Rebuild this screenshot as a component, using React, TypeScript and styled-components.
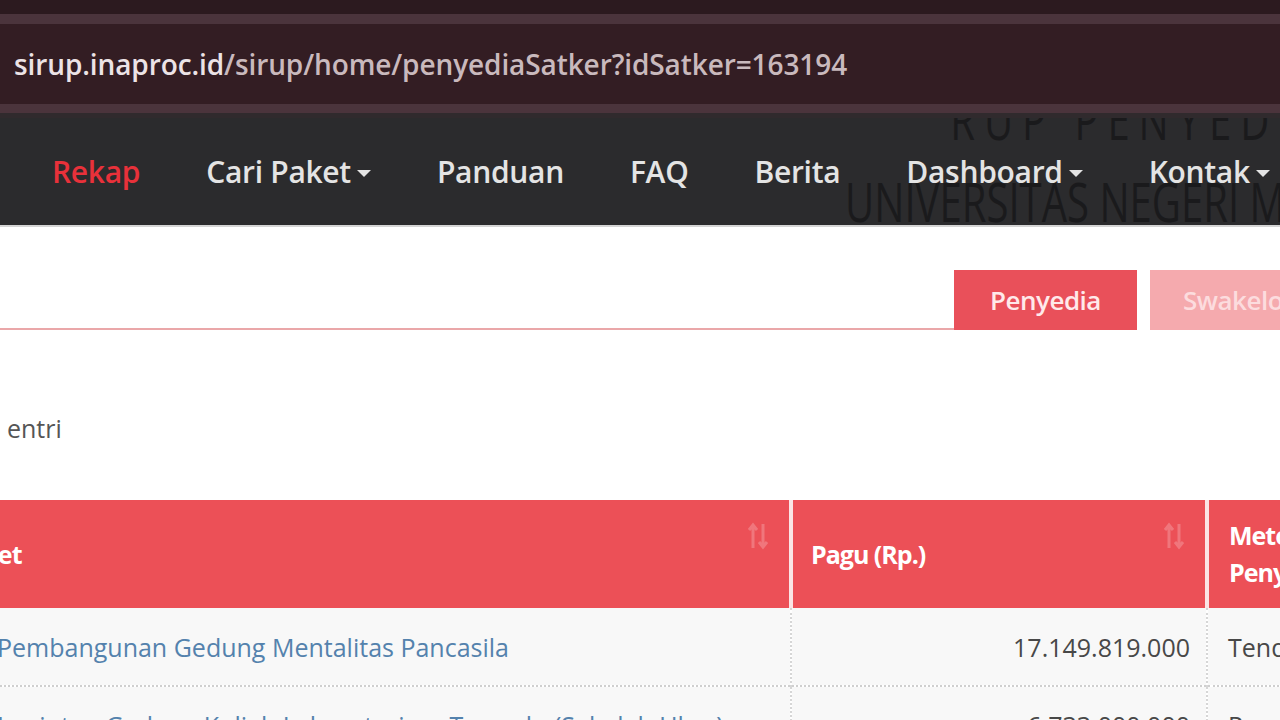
import styled, { createGlobalStyle } from 'styled-components'

const Global = createGlobalStyle`
	html, body {
		margin: 0;
		padding: 0;
		background: #ffffff;
		overflow: hidden;
	}
	body {
		font-family: "Open Sans", "DejaVu Sans", sans-serif;
	}
`

const Page = styled.div`
	width: 1280px;
	height: 720px;
	overflow: hidden;
	display: flex;
	flex-direction: column;
	& > * {
		flex-shrink: 0;
	}
`

const Chrome = styled.div`
	display: flex;
	flex-direction: column;
	background: #2c1a1f;
	padding-top: 14px;
`

const Band = styled.div<{ $h: number }>`
	height: ${p => p.$h}px;
	background: #4b343c;
`

const UrlBar = styled.div`
	height: 80px;
	background: #331d23;
	display: flex;
	align-items: center;
	padding-left: 14px;
	font-size: 28px;
	letter-spacing: -0.1px;
	font-weight: 600;
	color: #c9b9bd;
`

const Host = styled.span`
	color: #ece3e6;
`

const Shadow = styled.div`
	height: 5px;
	background: #302a2d;
`

const Navbar = styled.nav`
	position: relative;
	height: 107px;
	background: #2b2b2d;
	border-bottom: 2px solid #d4d4d4;
	overflow: hidden;
	display: flex;
	align-items: center;
	padding-left: 52px;
	gap: 66px;
`

const Heading = styled.div`
	position: absolute;
	left: 845px;
	top: -40px;
	color: #1a1a1c;
	font-family: "Open Sans", sans-serif;
	font-size: 54px;
	line-height: 82px;
	white-space: nowrap;
	transform: scaleX(0.742);
	transform-origin: left top;
	z-index: 0;
`

const HeadLine = styled.div<{ $indent: number; $spacing: number }>`
	padding-left: ${p => p.$indent}px;
	letter-spacing: ${p => p.$spacing}px;
`

const NavItem = styled.a<{ $active?: boolean }>`
	position: relative;
	z-index: 1;
	display: flex;
	align-items: center;
	gap: 6px;
	font-size: 30px;
	font-weight: 600;
	letter-spacing: -0.3px;
	color: ${p => (p.$active ? '#e8313a' : '#e4e4e4')};
	text-decoration: none;
	white-space: nowrap;
`

const Caret = styled.span`
	width: 0;
	height: 0;
	margin-top: 4px;
	border-left: 7px solid transparent;
	border-right: 7px solid transparent;
	border-top: 7px solid currentColor;
`

const Content = styled.main`
	display: flex;
	flex-direction: column;
	padding-top: 43px;
`

const TabBar = styled.div`
	display: flex;
	align-items: flex-end;
`

const TabLine = styled.div`
	flex: 1;
	border-bottom: 2px solid #eaa7a9;
`

const Tab = styled.button<{ $active?: boolean }>`
	height: 60px;
	width: ${p => (p.$active ? 183 : 160)}px;
	flex-shrink: 0;
	border: none;
	background: ${p => (p.$active ? '#e9505a' : '#f5aaae')};
	color: ${p => (p.$active ? '#ffe9ea' : '#fcdcde')};
	font-family: "Open Sans", sans-serif;
	font-size: 26px;
	font-weight: 600;
	letter-spacing: -0.5px;
	text-align: ${p => (p.$active ? 'center' : 'left')};
	padding: 0 0 0 ${p => (p.$active ? 0 : 33)}px;
	margin-left: ${p => (p.$active ? 0 : 13)}px;
	margin-right: ${p => (p.$active ? 0 : -30)}px;
`

const Entries = styled.div`
	margin-top: 83px;
	padding-left: 7px;
	font-size: 25px;
	color: #555555;
	height: 30px;
	line-height: 30px;
`

const TableWrap = styled.div`
	margin-top: 57px;
	overflow: hidden;
`

const Table = styled.table`
	margin-left: -100px;
	border-collapse: collapse;
	table-layout: fixed;
	width: 1500px;
`

const Head = styled.th<{ $w: number; $pad: number }>`
	position: relative;
	width: ${p => p.$w}px;
	height: 108px;
	padding: 0 0 0 ${p => Math.max(0, p.$pad)}px;
	text-indent: ${p => Math.min(0, p.$pad)}px;
	background: #ec5057;
	border-right: 4px solid #fbe4e5;
	color: #ffffff;
	font-size: 25px;
	font-weight: 700;
	letter-spacing: -1px;
	text-align: left;
	line-height: 37px;
	box-sizing: border-box;
`

const SortIcon = styled.svg`
	position: absolute;
	right: 20px;
	top: 22px;
	opacity: 0.22;
`

const Row = styled.tr`
	background: #f8f8f8;
	border-bottom: 2px dotted #cfcfcf;
`

const Cell = styled.td<{ $align?: string; $pad: number }>`
	height: 78px;
	padding: 0 ${p => (p.$align === 'right' ? 16 : 0)}px 0 ${p => p.$pad}px;
	text-align: ${p => p.$align || 'left'};
	font-size: 25px;
	color: #484848;
	white-space: nowrap;
	overflow: hidden;
	border-right: 2px dotted #d6d6d6;
	box-sizing: border-box;
`

const Link = styled.a`
	color: #5482ad;
	text-decoration: none;
`

function Sort() {
	return (
		<SortIcon width="22" height="28" viewBox="0 0 22 28">
			<path d="M6 26 V3 M2 8 L6 3 L10 8" stroke="#fff" strokeWidth="3" fill="none" />
			<path d="M16 2 V25 M12 20 L16 25 L20 20" stroke="#fff" strokeWidth="3" fill="none" />
		</SortIcon>
	)
}

const rows = [
	{ name: 'Pembangunan Gedung Mentalitas Pancasila', pagu: '17.149.819.000', metode: 'Tender' },
	{ name: 'Lanjutan Gedung Kuliah Laboratorium Terpadu (Sekolah Ukur)', pagu: '6.733.000.000', metode: 'Pengadaan Langsung' },
]

export default function App() {
	return (
		<Page>
			<Global />
			<Chrome>
				<Band $h={10} />
				<UrlBar>
					<Host>sirup.inaproc.id</Host>/sirup/home/penyediaSatker?idSatker=163194
				</UrlBar>
				<Band $h={9} />
				<Shadow />
			</Chrome>
			<Navbar>
				<Heading>
					<HeadLine $indent={142} $spacing={12}>RUP PENYEDIA</HeadLine>
					<HeadLine $indent={0} $spacing={0}>UNIVERSITAS NEGERI MAKASSAR</HeadLine>
				</Heading>
				<NavItem $active>Rekap</NavItem>
				<NavItem>Cari Paket<Caret /></NavItem>
				<NavItem>Panduan</NavItem>
				<NavItem>FAQ</NavItem>
				<NavItem>Berita</NavItem>
				<NavItem>Dashboard<Caret /></NavItem>
				<NavItem>Kontak<Caret /></NavItem>
			</Navbar>
			<Content>
				<TabBar>
					<TabLine />
					<Tab $active>Penyedia</Tab>
					<Tab>Swakelola</Tab>
				</TabBar>
				<Entries>entri</Entries>
				<TableWrap>
					<Table>
						<thead>
							<tr>
								<Head $w={891} $pad={-22}>Nama Paket<Sort /></Head>
								<Head $w={416} $pad={18}>Pagu (Rp.)<Sort /></Head>
								<Head $w={193} $pad={20}>Metode Penyedia</Head>
							</tr>
						</thead>
						<tbody>
							{rows.map(r => (
								<Row key={r.name}>
									<Cell $pad={97}><Link>{r.name}</Link></Cell>
									<Cell $pad={0} $align="right">{r.pagu}</Cell>
									<Cell $pad={20}>{r.metode}</Cell>
								</Row>
							))}
						</tbody>
					</Table>
				</TableWrap>
			</Content>
		</Page>
	)
}
